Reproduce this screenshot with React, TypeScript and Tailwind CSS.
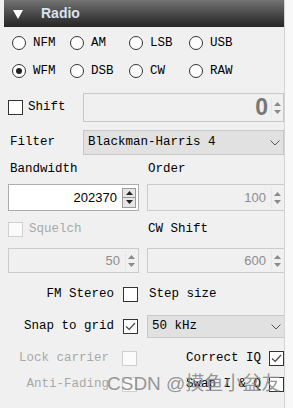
import React from 'react';

const mono = "font-['Liberation_Mono',monospace] text-[12.5px] leading-none";
const sans = "font-['Liberation_Sans',Arial,sans-serif]";

function Radio({ label, checked = false }: { label: string; checked?: boolean }) {
  return (
    <div className="flex items-center gap-[7px]">
      <span className="w-[14px] h-[14px] rounded-full border border-[#333] bg-white flex items-center justify-center shrink-0">
        {checked && <span className="w-[6px] h-[6px] rounded-full bg-[#222]" />}
      </span>
      <span className={`${mono} text-black`}>{label}</span>
    </div>
  );
}

function CheckBox({ checked = false, disabled = false }: { checked?: boolean; disabled?: boolean }) {
  return (
    <span
      className={`w-[15px] h-[15px] shrink-0 border flex items-center justify-center
        ${disabled ? 'border-[#cfcfcf] bg-[#fbfbfb]' : 'border-[#333] bg-white'}`}
    >
      {checked && (
        <svg width="11" height="9" viewBox="0 0 11 9" fill="none" stroke="#444" strokeWidth="1.2">
          <path d="M1 4.5l3.2 3L10 1" />
        </svg>
      )}
    </span>
  );
}

function Arrows({ enabled = false }: { enabled?: boolean }) {
  if (enabled) {
    return (
      <div className="flex flex-col w-[14px] h-[20px] border border-[#9a9a9a] shrink-0">
        <div className="flex-1 bg-[#e6e6e6] flex items-center justify-center border-b border-[#9a9a9a]">
          <svg width="7" height="4" viewBox="0 0 7 4"><path d="M0 4L3.5 0L7 4z" fill="#222" /></svg>
        </div>
        <div className="flex-1 bg-[#e6e6e6] flex items-center justify-center">
          <svg width="7" height="4" viewBox="0 0 7 4"><path d="M0 0L3.5 4L7 0z" fill="#222" /></svg>
        </div>
      </div>
    );
  }
  return (
    <div className="flex flex-col w-[11px] h-[20px] shrink-0 gap-[4px] items-center justify-center border-l border-[#e6e6e6]">
      <svg width="7" height="4" viewBox="0 0 7 4"><path d="M0 4L3.5 0L7 4z" fill="#8a8a8a" /></svg>
      <svg width="7" height="4" viewBox="0 0 7 4"><path d="M0 0L3.5 4L7 0z" fill="#8a8a8a" /></svg>
    </div>
  );
}

function SpinBox({ value, enabled = false, h = 'h-[27px]' }: { value: string; enabled?: boolean; h?: string }) {
  return (
    <div
      className={`${h} flex items-center justify-end gap-[5px] pr-[2px] border
        ${enabled ? 'bg-white border-[#acacac]' : 'bg-[#f0f0f0] border-[#cccccc]'}`}
    >
      <span className={`${sans} text-[13px] ${enabled ? 'text-black' : 'text-[#8d8d8d]'}`}>{value}</span>
      <Arrows enabled={enabled} />
    </div>
  );
}

function Combo({ value, h }: { value: string; h: string }) {
  return (
    <div className={`${h} flex items-center justify-between pl-[4px] pr-[3px] bg-[#e1e1e1] border border-[#c8c8c8]`}>
      <span className={`${mono} text-black`}>{value}</span>
      <svg width="10" height="6" viewBox="0 0 10 6" fill="none" stroke="#555" strokeWidth="1">
        <path d="M0.5 0.5L5 5L9.5 0.5" />
      </svg>
    </div>
  );
}

export default function App() {
  return (
    <div className="w-[293px] h-[408px] bg-[#f8f8f8] flex overflow-hidden relative">
      <div className="w-[285px] h-full bg-[#f0f0f0] border-r border-[#d4d4d4] overflow-hidden flex flex-col">
        {/* Header */}
        <div className="ml-[4px] h-[27px] shrink-0 flex items-center gap-[18px] pl-[9px] bg-gradient-to-b from-[#747474] via-[#4a4a4a] to-[#262626]">
          <svg width="10" height="10" viewBox="0 0 10 10"><path d="M0 1h10L5 10z" fill="#fff" /></svg>
          <span className={`${sans} text-[14px] font-bold text-[#d8e2f2]`}>Radio</span>
        </div>

        {/* Modes */}
        <div className="mt-[2px] pl-[12px] grid grid-cols-[58px_59px_60px_1fr] grid-rows-[28px_28px] items-center">
          <Radio label="NFM" />
          <Radio label="AM" />
          <Radio label="LSB" />
          <Radio label="USB" />
          <Radio label="WFM" checked />
          <Radio label="DSB" />
          <Radio label="CW" />
          <Radio label="RAW" />
        </div>

        {/* Shift */}
        <div className="mt-[8px] h-[29px] flex items-center pl-[8px]">
          <div className="w-[75px] flex items-center gap-[5px]">
            <CheckBox />
            <span className={`${mono} text-black`}>Shift</span>
          </div>
          <div className="flex-1 h-full flex items-center justify-end gap-[3px] pr-[1px] bg-[#f0f0f0] border border-[#c8c8c8]">
            <span className={`${sans} text-[23px] font-bold text-[#777] leading-none`}>0</span>
            <Arrows />
          </div>
        </div>

        {/* Filter */}
        <div className="mt-[8px] h-[25px] flex items-center pl-[8px]">
          <span className={`${mono} w-[75px] pl-[2px] text-black`}>Filter</span>
          <div className="flex-1">
            <Combo value="Blackman-Harris 4" h="h-[25px]" />
          </div>
        </div>

        {/* Bandwidth / Order */}
        <div className="pl-[8px] grid grid-cols-[131px_138px] gap-x-[8px]">
          <div className={`h-[29px] flex items-center pl-[2px] ${mono} text-black`}>Bandwidth</div>
          <div className={`h-[29px] flex items-center pl-[1px] ${mono} text-black`}>Order</div>
          <SpinBox value="202370" enabled />
          <SpinBox value="100" />

          <div className="h-[37px] flex items-center gap-[6px]">
            <CheckBox disabled />
            <span className={`${mono} text-[#a8a8a8]`}>Squelch</span>
          </div>
          <div className={`h-[37px] flex items-center pl-[1px] ${mono} text-black`}>CW Shift</div>
          <SpinBox value="50" h="h-[25px]" />
          <SpinBox value="600" h="h-[25px]" />

          <div className="h-[42px] flex items-center justify-end gap-[9px] pr-[1px]">
            <span className={`${mono} text-black`}>FM Stereo</span>
            <CheckBox />
          </div>
          <div className={`h-[42px] flex items-center pl-[2px] ${mono} text-black`}>Step size</div>

          <div className="h-[23px] flex items-center justify-end gap-[9px] pr-[1px]">
            <span className={`${mono} text-black`}>Snap to grid</span>
            <CheckBox checked />
          </div>
          <Combo value="50 kHz" h="h-[23px]" />

          <div className="mt-[4px] h-[32px] flex items-center justify-end gap-[13px] pr-[2px]">
            <span className={`${mono} text-[#a8a8a8]`}>Lock carrier</span>
            <CheckBox disabled />
          </div>
          <div className="mt-[4px] h-[32px] flex items-center justify-end gap-[8px] pr-[1px]">
            <span className={`${mono} text-black`}>Correct IQ</span>
            <CheckBox checked />
          </div>

          <div className="h-[20px] flex items-center justify-end gap-[13px] pr-[2px]">
            <span className={`${mono} text-[#a8a8a8]`}>Anti-Fading</span>
            <CheckBox disabled />
          </div>
          <div className="h-[20px] flex items-center justify-end gap-[8px] pr-[1px]">
            <span className={`${mono} text-black`}>Swap I &amp; Q</span>
            <CheckBox />
          </div>
        </div>
      </div>

      {/* Watermark */}
      <div
        className="absolute left-[107px] top-[372px] text-[19px] leading-[24px] text-[#8a8a8a]/90 whitespace-nowrap font-['Liberation_Sans','Noto_Sans_CJK_SC',sans-serif]"
      >
        CSDN @摸鱼小盆友
      </div>
    </div>
  );
}
